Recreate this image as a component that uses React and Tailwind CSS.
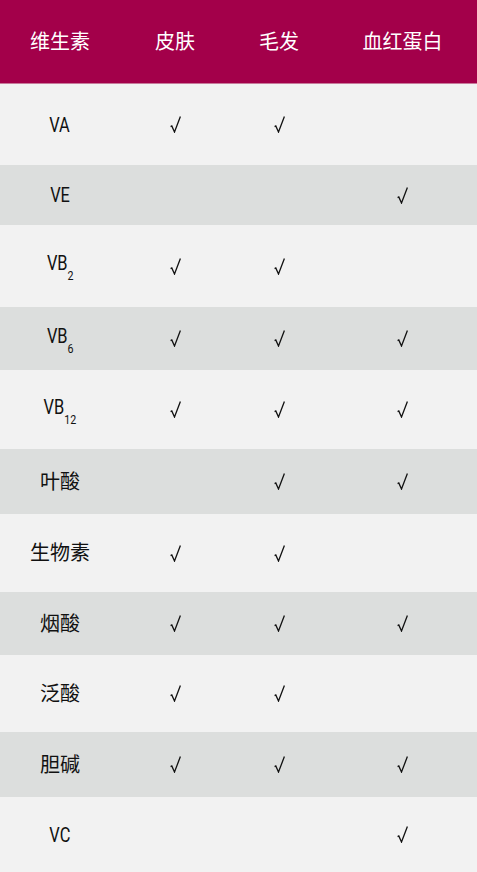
import React from 'react';

const rows = [
  { name: 'VA', h: 'h-[81px]', dark: false, cols: [true, true, false] },
  { name: 'VE', h: 'h-[60px]', dark: true, cols: [false, false, true] },
  { name: 'VB', sub: '2', h: 'h-[82px]', dark: false, cols: [true, true, false] },
  { name: 'VB', sub: '6', h: 'h-[63px]', dark: true, cols: [true, true, true] },
  { name: 'VB', sub: '12', h: 'h-[79px]', dark: false, cols: [true, true, true] },
  { name: '叶酸', h: 'h-[65px]', dark: true, cols: [false, true, true] },
  { name: '生物素', h: 'h-[78px]', dark: false, cols: [true, true, false] },
  { name: '烟酸', h: 'h-[63px]', dark: true, cols: [true, true, true] },
  { name: '泛酸', h: 'h-[77px]', dark: false, cols: [true, true, false] },
  { name: '胆碱', h: 'h-[65px]', dark: true, cols: [true, true, true] },
  { name: 'VC', h: 'h-[75px]', dark: false, cols: [false, false, true] },
];

const grid = 'grid grid-cols-[120px_110px_98px_1fr] items-center text-center';

// hand-drawn tick, the √ in the picture is taller than any font glyph
const Check = () => (
  <svg width="11" height="17" viewBox="0 0 11 17" className="inline-block">
    <path d="M0.6 10.6 L1.8 9.9 L4.5 16 L10.4 0.6" fill="none" stroke="#111" strokeWidth="1.3" strokeLinejoin="miter" />
  </svg>
);

const isLatin = (s) => /^[A-Z]/.test(s);

export default function App() {
  return (
    <div className="w-[477px] font-['Roboto','Noto_Sans_CJK_SC',sans-serif] text-[#111]">
      <div className={`${grid} h-[84px] bg-[#a3004a] text-white text-[20px] border-b border-[#c77a9b]`}>
        <div>维生素</div>
        <div>皮肤</div>
        <div>毛发</div>
        <div>血红蛋白</div>
      </div>
      {rows.map((r, i) => (
        <div key={i} className={`${grid} ${r.h} ${r.dark ? 'bg-[#dcdedd]' : 'bg-[#f2f2f2]'} text-[20px]`}>
          <div className="leading-none">
            <span className={isLatin(r.name) ? 'inline-block scale-x-[0.82]' : ''}>
              {r.name}
              {r.sub && <sub className="text-[13px] align-[-7px] leading-none">{r.sub}</sub>}
            </span>
          </div>
          {r.cols.map((c, j) => (
            <div key={j} className="flex justify-center">{c && <Check />}</div>
          ))}
        </div>
      ))}
    </div>
  );
}
